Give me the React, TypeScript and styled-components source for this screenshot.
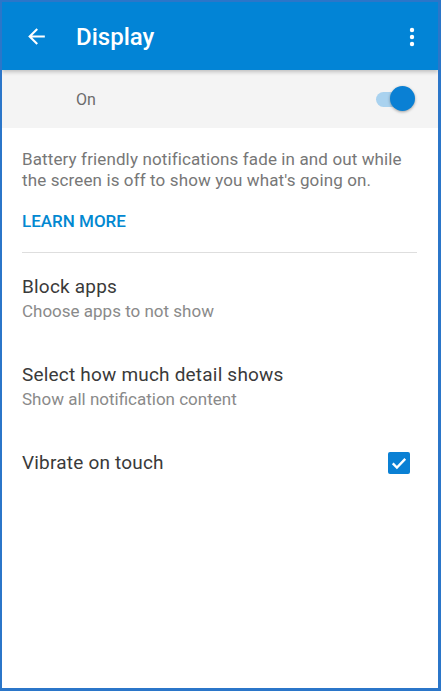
import React from "react";
import styled, { createGlobalStyle } from "styled-components";

const Global = createGlobalStyle`
  html, body { margin: 0; padding: 0; background: #fff; }
  body { font-family: Roboto, "Noto Sans", sans-serif; }
  * { box-sizing: border-box; }
`;

const Frame = styled.div`
  width: 441px;
  height: 691px;
  border-style: solid;
  border-color: #2b76c9;
  border-width: 2px 3px 3px 2px;
  background: #fff;
  display: flex;
  flex-direction: column;
  overflow: hidden;
`;

const AppBar = styled.header`
  height: 68px;
  flex: none;
  background: #0284d6;
  display: flex;
  align-items: center;
  padding: 1px 14px 0 22px;
  position: relative;
  z-index: 1;
  box-shadow: 0 2px 4px rgba(0, 0, 0, 0.22);
`;

const IconButton = styled.button`
  background: none;
  border: none;
  padding: 0;
  margin: 0;
  display: flex;
  align-items: center;
  justify-content: center;
  color: #fff;
`;

const Title = styled.h1`
  margin: 0 0 0 27px;
  flex: 1;
  font-size: 24px;
  font-weight: 500;
  color: #fff;
`;

const MasterRow = styled.div`
  height: 58px;
  flex: none;
  background: #f4f4f4;
  display: flex;
  align-items: center;
  padding: 0 24px 0 74px;
`;

const MasterLabel = styled.span`
  flex: 1;
  font-size: 16px;
  color: #6b6b6b;
`;

const Switch = styled.div`
  position: relative;
  width: 38px;
  height: 24px;
  display: flex;
  align-items: center;
`;

const Track = styled.div`
  width: 34px;
  height: 15px;
  border-radius: 8px;
  background: #a9d2ef;
`;

const Thumb = styled.div`
  position: absolute;
  right: -1px;
  top: -1px;
  width: 25px;
  height: 25px;
  border-radius: 50%;
  background: #0a80d4;
  box-shadow: 0 1px 3px rgba(0, 0, 0, 0.35);
`;

const Content = styled.main`
  padding: 0 21px 0 20px;
  display: flex;
  flex-direction: column;
`;

const Description = styled.p`
  margin: 21px 0 0;
  font-size: 17px;
  line-height: 21px;
  color: #777;
  letter-spacing: 0.12px;
`;

const LearnMore = styled.a`
  margin-top: 19px;
  font-size: 17px;
  font-weight: 500;
  color: #0288d1;
  text-decoration: none;
  line-height: 22px;
`;

const Divider = styled.hr`
  margin: 20px 0 0;
  border: none;
  border-top: 1px solid #dedede;
  height: 0;
`;

const Item = styled.div<{ $top: number }>`
  margin-top: ${(p) => p.$top}px;
  display: flex;
  align-items: center;
`;

const ItemText = styled.div`
  flex: 1;
  display: flex;
  flex-direction: column;
`;

const ItemTitle = styled.div`
  font-size: 19px;
  line-height: 24px;
  color: #3a3a3a;
  letter-spacing: 0.2px;
`;

const ItemSub = styled.div`
  font-size: 17px;
  line-height: 22px;
  color: #8a8a8a;
  margin-top: 1px;
`;

const Checkbox = styled.div`
  width: 22px;
  height: 22px;
  border-radius: 2px;
  background: #0a80d4;
  display: flex;
  align-items: center;
  justify-content: center;
  margin-right: 7px;
`;

export default function App() {
  return (
    <>
      <Global />
      <Frame>
        <AppBar>
          <IconButton aria-label="Back">
            <svg width="25" height="25" viewBox="0 0 24 24">
              <path
                d="M20 11H7.83l5.59-5.59L12 4l-8 8 8 8 1.41-1.41L7.83 13H20v-2z"
                fill="#fff"
              />
            </svg>
          </IconButton>
          <Title>Display</Title>
          <IconButton aria-label="More">
            <svg width="24" height="24" viewBox="0 0 24 24">
              <circle cx="12" cy="5" r="2.2" fill="#fff" />
              <circle cx="12" cy="12" r="2.2" fill="#fff" />
              <circle cx="12" cy="19" r="2.2" fill="#fff" />
            </svg>
          </IconButton>
        </AppBar>
        <MasterRow>
          <MasterLabel>On</MasterLabel>
          <Switch>
            <Track />
            <Thumb />
          </Switch>
        </MasterRow>
        <Content>
          <Description>
            Battery friendly notifications fade in and out while the screen is off to show you what's going on.
          </Description>
          <LearnMore href="#">LEARN MORE</LearnMore>
          <Divider />
          <Item $top={22}>
            <ItemText>
              <ItemTitle>Block apps</ItemTitle>
              <ItemSub>Choose apps to not show</ItemSub>
            </ItemText>
          </Item>
          <Item $top={41}>
            <ItemText>
              <ItemTitle>Select how much detail shows</ItemTitle>
              <ItemSub>Show all notification content</ItemSub>
            </ItemText>
          </Item>
          <Item $top={41}>
            <ItemText>
              <ItemTitle>Vibrate on touch</ItemTitle>
            </ItemText>
            <Checkbox>
              <svg width="20" height="20" viewBox="0 0 24 24">
                <path d="M4.5 12.5l5 5L19.5 7" fill="none" stroke="#fff" strokeWidth="2.8" />
              </svg>
            </Checkbox>
          </Item>
        </Content>
      </Frame>
    </>
  );
}
